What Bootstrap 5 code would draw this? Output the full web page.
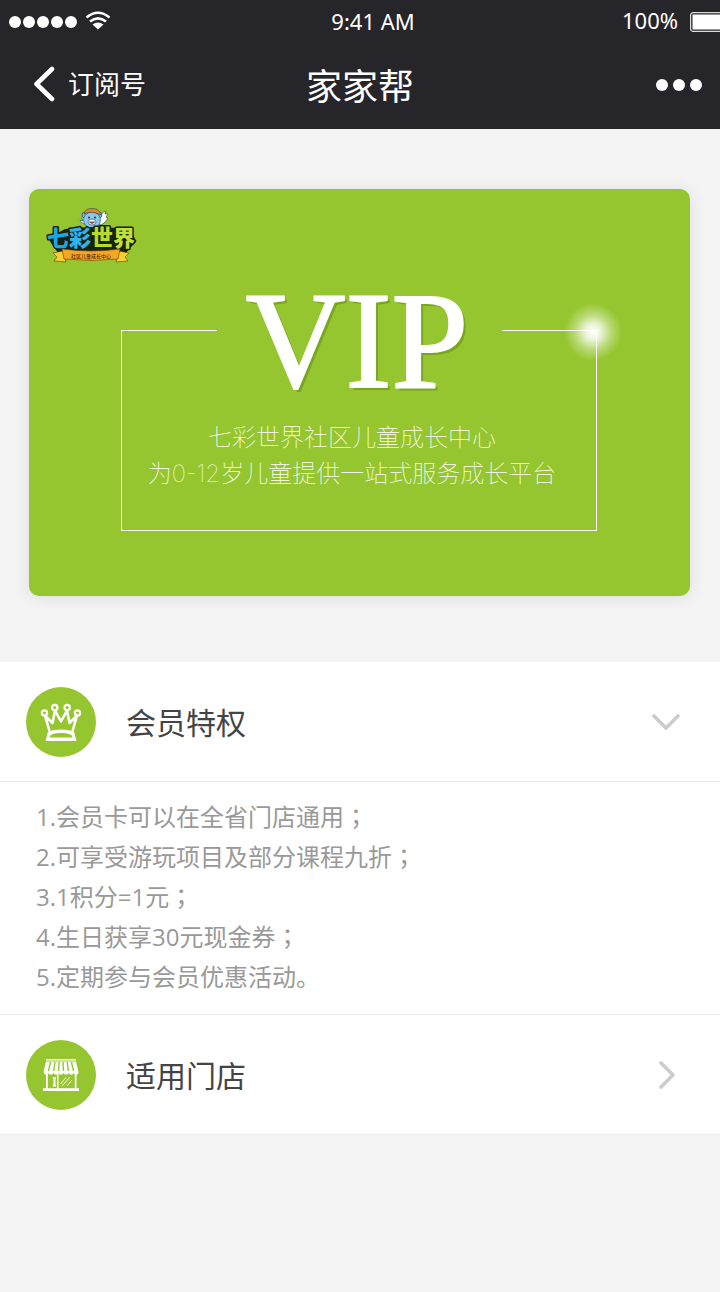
<!DOCTYPE html>
<html lang="zh-CN">
<head>
<meta charset="utf-8">
<meta name="viewport" content="width=device-width, initial-scale=1">
<title>家家帮</title>
<link href="https://cdn.jsdelivr.net/npm/bootstrap@5.3.0/dist/css/bootstrap.min.css" rel="stylesheet">
<style>
  body { background: #f4f4f4; font-family: "Open Sans", "Noto Sans CJK SC", sans-serif; color: #444; }
  a, a:hover { color: inherit; text-decoration: none; }
  svg { display: block; flex: none; }
  .topbar { background: #26252a; color: #fff; }
  .status-row { height: 44px; font: 22px/42px "Noto Sans", sans-serif; padding-left: 8px; overflow: hidden; }
  .clock { padding: 0 0 2px 18px; }
  .title-row { height: 85px; padding: 0 18px 4px; }
  .side { flex: 1 1 0; }
  .back-link { font-size: 26px; line-height: 36px; gap: 12px; padding: 4px 0 0 14px; }
  .page-title { font-size: 36px; line-height: 44px; font-weight: 400; }
  .card-zone { padding: 60px 30px 66px 29px; }
  .vip-card { background: #95c62f; border-radius: 10px; color: #fff; padding: 19px 93px 65px 92px; box-shadow: 0 2px 16px rgba(60, 50, 90, .12); }
  .brand { margin-left: -76px; }
  .frame { margin-top: 65px; height: 201px; border: 1px solid #fff; border-top: 0; }
  .frame-top { height: 84px; }
  .rule { flex: 1 1 0; height: 1px; background: #fff; }
  .vip-word { width: 285px; height: 1px; padding-right: 4px; font: 138px/22px "Liberation Serif", serif; text-shadow: 3px 3px 0 #78a61f; -webkit-text-stroke: 2px #fff; }
  .slogan { font: 100 24px/36px Inter, "Noto Sans CJK SC", sans-serif; padding: 6px 14px 0 0; }
  .glow { right: -27px; top: -28px; width: 60px; height: 60px; background: radial-gradient(circle, #fff 0, rgba(255,255,255,.85) 16%, rgba(255,255,255,.35) 42%, rgba(255,255,255,0) 68%); }
  .entry { height: 120px; padding: 0 40px 0 26px; font-size: 30px; gap: 30px; border: 0; border-bottom: 1px solid #ebebeb; background: #fff; color: #444; }
  a.entry:hover { color: #444; }
  .entry-label { line-height: 44px; padding-top: 3px; }
  .perks { padding: 15px 36px 17px; font-size: 24px; line-height: 40px; color: #999; border-bottom: 1px solid #ebebeb; }
  .semi { font-family: "Noto Sans CJK TC", sans-serif; line-height: 1; }
</style>
</head>
<body>
<header class="topbar">
  <div class="status-row d-flex align-items-center">
    <div class="side d-flex align-items-center">
      <svg width="102" height="24" viewBox="0 0 102 24" fill="#fff" aria-label="信号">
        <circle cx="7" cy="12" r="6"/><circle cx="21" cy="12" r="6"/><circle cx="35" cy="12" r="6"/><circle cx="49" cy="12" r="6"/><circle cx="63" cy="12" r="6"/>
        <path d="M78.500 7.500Q90 -2 101.500 7.500" fill="none" stroke="#fff" stroke-width="2.600"/>
        <path d="M82 11.600Q90 5 98 11.600" fill="none" stroke="#fff" stroke-width="2.600"/>
        <path d="M84.500 14.600Q90 10.500 95.500 14.600L90 19.500Z"/>
      </svg>
    </div>
    <div class="clock">9:41 AM</div>
    <div class="side d-flex align-items-center justify-content-end">
      <span class="me-2 pe-1 pb-1">100%</span>
      <svg width="30" height="20" viewBox="0 0 30 20"><rect x=".6" y=".6" width="40" height="18.800" rx="2.500" fill="none" stroke="#ddd" stroke-width="1.200"/><rect x="2.500" y="2.500" width="40" height="15" fill="#fff"/></svg>
    </div>
  </div>
  <nav class="title-row d-flex align-items-center" aria-label="导航">
    <div class="side"><a href="#" class="back-link d-inline-flex align-items-center">
      <svg width="24" height="36" viewBox="0 0 24 36"><path d="M20 3L4.500 18L20 33" fill="none" stroke="#fff" stroke-width="4.600" stroke-linecap="round" stroke-linejoin="round"/></svg>订阅号</a></div>
    <h1 class="page-title m-0 pt-1">家家帮</h1>
    <div class="side d-flex justify-content-end"><button type="button" class="btn p-0 border-0" aria-label="更多">
      <svg width="46" height="12" viewBox="0 0 46 12" fill="#fff"><circle cx="6" cy="6" r="6"/><circle cx="23" cy="6" r="6"/><circle cx="40" cy="6" r="6"/></svg></button></div>
  </nav>
</header>

<main>
  <section class="card-zone">
    <div class="vip-card">
      <svg class="brand" width="94" height="57" viewBox="0 0 94 57" aria-label="七彩世界">
        <!-- winged bear -->
        <g stroke="#24405c" stroke-width=".6">
          <path d="M54 12Q57 3 61 3L60 6L63 6L61 9L63 10Q59 17 54 17Z" fill="#fff"/>
          <path d="M40 16Q35 15 35 12L38 13Q36 8 38 8L43 14Z" fill="#fff"/>
          <circle cx="40" cy="7" r="3" fill="#77b5df"/><circle cx="54" cy="7" r="3" fill="#77b5df"/>
          <ellipse cx="47" cy="12" rx="8.500" ry="8" fill="#8cc7ec"/>
          <path d="M39 6Q40 0 48 .6Q55 1 55.500 7Q47 2 39 6Z" fill="#e78829"/>
          <ellipse cx="47" cy="14" rx="4" ry="3" fill="#e9f5fc"/>
          <path d="M44.500 14Q47 17 49.500 14Z" fill="#d6423a"/>
        </g>
        <circle cx="44" cy="9.500" r=".9" fill="#222"/><circle cx="50" cy="9.500" r=".9" fill="#222"/>
        <path d="M3 30L20 21L44 19L76 20L88 26L91 34L86 39L80 46H14L8 38Z" fill="#17220f"/>
        <g font-family="Noto Sans CJK SC, sans-serif" font-weight="900" font-size="22" stroke="#17220f" stroke-width="3" paint-order="stroke" stroke-linejoin="round">
          <text x="2" y="38" fill="#1ba6e6">七</text><text x="24" y="38" fill="#2fb3ea">彩</text>
          <text x="46" y="37" fill="#b7da2d">世</text><text x="68" y="38" fill="#c3e03a">界</text>
        </g>
        <path d="M18 43L8 45L12 49L9 53L21 54ZM74 43L84 45L80 49L83 53L71 54Z" fill="#f9cf2f" stroke="#6b3b0c" stroke-width=".6"/>
        <path d="M17 41Q46 45 75 41L73 51Q46 54 19 51Z" fill="#f5a623" stroke="#6b3b0c" stroke-width=".6"/>
        <text x="46" y="50" text-anchor="middle" font-family="Noto Sans CJK SC, sans-serif" font-size="5" font-weight="500" fill="#5b2d0a">社区儿童成长中心</text>
      </svg>
      <div class="frame position-relative">
        <div class="frame-top d-flex">
          <span class="rule"></span>
          <div class="vip-word text-center">VIP</div>
          <span class="rule"></span>
        </div>
        <p class="slogan text-center text-nowrap m-0">七彩世界社区儿童成长中心<br>为0-12岁儿童提供一站式服务成长平台</p>
        <span class="glow position-absolute"></span>
      </div>
    </div>
  </section>

  <section class="bg-white">
    <button type="button" class="entry w-100 d-flex align-items-center text-start" data-bs-toggle="collapse" data-bs-target="#perks" aria-expanded="true" aria-controls="perks">
      <svg width="70" height="70" viewBox="0 0 70 70">
        <circle cx="35" cy="35" r="35" fill="#95c62f"/>
        <g fill="none" stroke="#fff" stroke-width="2.200" stroke-linejoin="round">
          <circle cx="18.500" cy="26" r="2.600"/><circle cx="28.800" cy="20.600" r="2.700"/><circle cx="41.200" cy="20.600" r="2.700"/><circle cx="51.500" cy="26" r="2.600"/>
          <path stroke-width="2.600" d="M23.500 44L19 28.500L26.500 36L29 23.500L35 34.500L41 23.500L43.500 36L51 28.500L46.500 44"/>
        </g>
        <path fill="#fff" fill-rule="evenodd" d="M22 44.500Q35 40.500 48 44.500L50.500 54H19.500ZM23.500 50.500H46.500Q46.500 46 35 46T23.500 50.500Z"/>
      </svg>
      <span class="entry-label flex-grow-1">会员特权</span>
      <svg width="28" height="18" viewBox="0 0 28 18"><path d="M2 3L14 15L26 3" fill="none" stroke="#ccc" stroke-width="3.600" stroke-linecap="round" stroke-linejoin="round"/></svg>
    </button>
    <div id="perks" class="collapse show">
      <div class="perks">
        <div>1.会员卡可以在全省门店通用<span class="semi" lang="zh-TW">；</span></div>
        <div>2.可享受游玩项目及部分课程九折<span class="semi" lang="zh-TW">；</span></div>
        <div>3.1积分=1元<span class="semi" lang="zh-TW">；</span></div>
        <div>4.生日获享30元现金券<span class="semi" lang="zh-TW">；</span></div>
        <div>5.定期参与会员优惠活动。</div>
      </div>
    </div>
    <a href="#" class="entry d-flex align-items-center">
      <svg width="70" height="70" viewBox="0 0 70 70">
        <circle cx="35" cy="35" r="35" fill="#95c62f"/>
        <g fill="#fff">
          <path d="M20 19H50V20.500H20ZM20 21.500H50L52.500 32Q52.500 34.800 50.200 34.800T47.800 33Q47 34.800 45.300 34.800T42.600 33Q42 34.800 40.200 34.800T37.600 33Q37 34.800 35 34.800T32.400 33Q32 34.800 30 34.800T27.400 33Q27 34.800 24.800 34.800T22.200 33Q21.500 34.800 19.800 34.800T17.500 32Z"/>
          <path d="M20 34H21.800V48.500H20ZM31 34H32.500V48.500H31ZM48.800 34H50.500V48.500H48.800ZM17 48.300H53V51H17ZM27.500 37.500H29.500V46H27.500ZM26.800 37H30V38.500H26.800ZM26.800 45H30V46.500H26.800Z"/>
        </g>
        <g stroke="#95c62f" stroke-width="1.400"><path d="M24.500 22L22.500 31M29 22L27.800 31M33.200 22L32.600 31M37 22L37.500 31M41.200 22L42.400 31M45.500 22L47.500 31"/></g>
        <path d="M34.500 44L40 37.500M36 46L44 37M41 46L46 40" stroke="#fff" stroke-width="1"/>
      </svg>
      <span class="entry-label flex-grow-1">适用门店</span>
      <svg class="me-1" width="18" height="28" viewBox="0 0 18 28"><path d="M3 2L15 14L3 26" fill="none" stroke="#ccc" stroke-width="3.600" stroke-linecap="round" stroke-linejoin="round"/></svg>
    </a>
  </section>
</main>
<script src="https://cdn.jsdelivr.net/npm/bootstrap@5.3.0/dist/js/bootstrap.bundle.min.js"></script>
</body>
</html>
